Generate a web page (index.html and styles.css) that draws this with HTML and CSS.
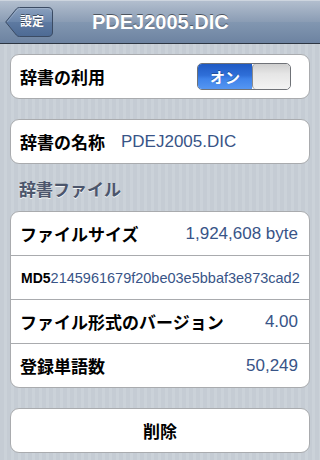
FILE: index.html
```html
<!DOCTYPE html>
<html lang="ja">
<head>
<meta charset="utf-8">
<title>PDEJ2005.DIC</title>
<link rel="stylesheet" href="styles.css">
</head>
<body>
<header class="navbar">
  <a class="back" href="#">
    <svg class="back-shape" width="48" height="30" viewBox="0 0 48 30" aria-hidden="true">
      <defs>
        <linearGradient id="bg" x1="0" y1="0" x2="0" y2="1">
          <stop offset="0" stop-color="#8ba1bf"/>
          <stop offset="0.5" stop-color="#6a85aa"/>
          <stop offset="0.5" stop-color="#5e7aa1"/>
          <stop offset="1" stop-color="#4d6a94"/>
        </linearGradient>
      </defs>
      <path d="M0.7 15 L11.3 2 Q12.6 0.5 14.5 0.5 H43 Q47.5 0.5 47.5 5 V25 Q47.5 29.5 43 29.5 H14.5 Q12.6 29.5 11.3 28 Z" fill="url(#bg)" stroke="#3b4b63" stroke-width="1"/>
      <path d="M2.2 15 L12 3 Q13 1.6 14.6 1.6 H43 Q46.4 1.6 46.4 5" fill="none" stroke="rgba(255,255,255,0.18)" stroke-width="1"/>
    </svg>
    <span class="back-label">設定</span>
  </a>
  <h1 class="title">PDEJ2005.DIC</h1>
</header>

<main class="content">
  <section class="group">
    <div class="row">
      <span class="label">辞書の利用</span>
      <span class="switch">
        <span class="switch-on">オン</span>
        <span class="switch-knob"></span>
      </span>
    </div>
  </section>

  <section class="group gap">
    <div class="row">
      <span class="label">辞書の名称</span>
      <span class="value value-inline">PDEJ2005.DIC</span>
    </div>
  </section>

  <h2 class="section-header">辞書ファイル</h2>

  <section class="group">
    <div class="row">
      <span class="label">ファイルサイズ</span>
      <span class="value">1,924,608 byte</span>
    </div>
    <div class="row">
      <span class="label label-small">MD5</span><span class="value value-small">2145961679f20be03e5bbaf3e873cad2</span>
    </div>
    <div class="row">
      <span class="label">ファイル形式のバージョン</span>
      <span class="value">4.00</span>
    </div>
    <div class="row">
      <span class="label">登録単語数</span>
      <span class="value">50,249</span>
    </div>
  </section>

  <section class="group gap">
    <button class="row button-row" type="button">削除</button>
  </section>
</main>
</body>
</html>
```

FILE: styles.css
```css
* {
  box-sizing: border-box;
}

html, body {
  margin: 0;
  padding: 0;
}

body {
  width: 320px;
  height: 460px;
  overflow: hidden;
  font-family: "Liberation Sans", "Noto Sans CJK JP", sans-serif;
  background-color: #c5ccd4;
  background-image: repeating-linear-gradient(90deg, #c5ccd4 0, #c5ccd4 4px, #cbd2d9 4px, #cbd2d9 7px);
}

/* Navigation bar */
.navbar {
  height: 44px;
  display: flex;
  align-items: center;
  padding: 0 5px;
  border-top: 1px solid #cdd5df;
  border-bottom: 1px solid #2d3642;
  background: linear-gradient(#b2bece 0%, #8a9cb4 50%, #8297b1 50%, #6d83a1 100%);
  position: relative;
}

.back {
  position: relative;
  width: 48px;
  height: 30px;
  display: flex;
  align-items: center;
  padding-left: 15px;
  text-decoration: none;
  margin-top: 0;
  z-index: 1;
}

.back-shape {
  position: absolute;
  left: 0;
  top: 0;
  z-index: -1;
}

.back-label {
  color: #fff;
  font-size: 12px;
  font-weight: bold;
  text-shadow: 0 -1px 0 rgba(0, 0, 0, 0.45);
  line-height: 1;
}

.title {
  margin: 0 0 0 39px;
  color: #fff;
  font-size: 20px;
  font-weight: bold;
  text-shadow: 0 -1px 0 rgba(0, 0, 0, 0.5);
  line-height: 1;
}

/* Content */
.content {
  padding: 10px 10px 0;
}

.group {
  background: #fff;
  border: 1px solid #a9abae;
  border-radius: 9px;
  overflow: hidden;
}

.group.gap {
  margin-top: 20px;
}

.row {
  height: 43px;
  display: flex;
  align-items: center;
  padding: 0 11px 0 9px;
}

.row + .row {
  height: 44px;
  border-top: 1px solid #a9abae;
}

.label {
  font-size: 17px;
  font-weight: bold;
  color: #000;
  white-space: nowrap;
}

.label-small {
  font-size: 14px;
  padding-left: 1px;
}

.value {
  margin-left: auto;
  font-size: 17px;
  color: #385487;
  white-space: nowrap;
}

.value-inline {
  margin-left: 16px;
}

.value-small {
  margin-left: 0;
  font-size: 14.5px;
  letter-spacing: 0;
}

/* Switch */
.switch {
  margin-left: auto;
  margin-right: 7px;
  width: 94px;
  height: 27px;
  display: flex;
  border: 1px solid #6f7277;
  border-radius: 5px;
  overflow: hidden;
}

.switch-on {
  width: 54px;
  display: flex;
  align-items: center;
  justify-content: center;
  color: #fff;
  font-size: 15px;
  font-weight: bold;
  text-shadow: 0 -1px 0 rgba(0, 0, 0, 0.3);
  background: linear-gradient(#1f5ac4 0%, #2f6fd8 45%, #3f83ea 60%, #5596f2 100%);
}

.switch-knob {
  flex: 1;
  border-left: 1px solid #8a8a8a;
  border-radius: 4px;
  background: linear-gradient(#cfcfcf 0%, #e6e6e6 40%, #f3f3f3 100%);
}

/* Section header */
.section-header {
  margin: 0;
  height: 47px;
  display: flex;
  align-items: flex-end;
  padding: 0 0 10px 9px;
  font-size: 17px;
  font-weight: bold;
  line-height: 20px;
  color: #4c566c;
  text-shadow: 0 1px 0 rgba(255, 255, 255, 0.8);
}

/* Delete button */
.button-row {
  width: 100%;
  border: 0;
  background: transparent;
  justify-content: center;
  padding: 0;
  font-family: "Liberation Sans", "Noto Sans CJK JP", sans-serif;
  font-size: 17px;
  font-weight: bold;
  color: #000;
}
```
